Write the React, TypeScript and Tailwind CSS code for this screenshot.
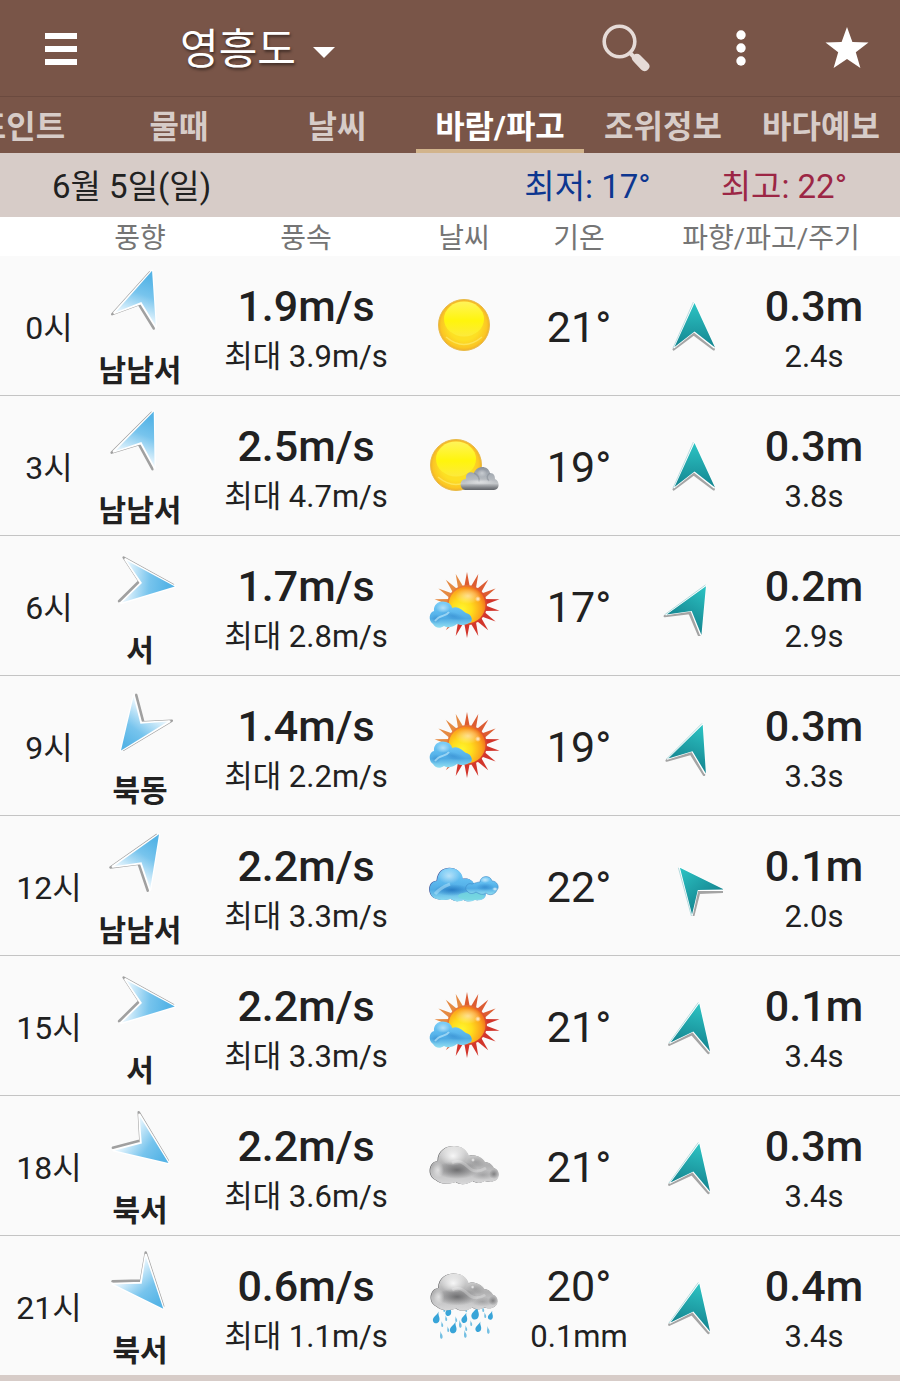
import React, { useState } from "react";
import clsx from "clsx";

type Weather = "sun" | "sunCloud" | "partly" | "clouds" | "overcast" | "rain";

type Forecast = {
  hour: string;
  windAngle: number;
  windDir: string;
  wind: string;
  gust: string;
  weather: Weather;
  temp: string;
  rain?: string;
  waveAngle: number;
  wave: string;
  period: string;
};

const tabs = ["포인트", "물때", "날씨", "바람/파고", "조위정보", "바다예보"];

const forecasts: Forecast[] = [
  { hour: "0시", windAngle: 19, windDir: "남남서", wind: "1.9m/s", gust: "3.9m/s", weather: "sun", temp: "21°", waveAngle: 0, wave: "0.3m", period: "2.4s" },
  { hour: "3시", windAngle: 22, windDir: "남남서", wind: "2.5m/s", gust: "4.7m/s", weather: "sunCloud", temp: "19°", waveAngle: 0, wave: "0.3m", period: "3.8s" },
  { hour: "6시", windAngle: 96, windDir: "서", wind: "1.7m/s", gust: "2.8m/s", weather: "partly", temp: "17°", waveAngle: 30, wave: "0.2m", period: "2.9s" },
  { hour: "9시", windAngle: 216, windDir: "북동", wind: "1.4m/s", gust: "2.2m/s", weather: "partly", temp: "19°", waveAngle: 21, wave: "0.3m", period: "3.3s" },
  { hour: "12시", windAngle: 32, windDir: "남남서", wind: "2.2m/s", gust: "3.3m/s", weather: "clouds", temp: "22°", waveAngle: -39, wave: "0.1m", period: "2.0s" },
  { hour: "15시", windAngle: 96, windDir: "서", wind: "2.2m/s", gust: "3.3m/s", weather: "partly", temp: "21°", waveAngle: 12, wave: "0.1m", period: "3.4s" },
  { hour: "18시", windAngle: 126, windDir: "북서", wind: "2.2m/s", gust: "3.6m/s", weather: "overcast", temp: "21°", waveAngle: 12, wave: "0.3m", period: "3.4s" },
  { hour: "21시", windAngle: 139, windDir: "북서", wind: "0.6m/s", gust: "1.1m/s", weather: "rain", temp: "20°", rain: "0.1mm", waveAngle: 12, wave: "0.4m", period: "3.4s" },
];

// Gradients shared by all the icons
function IconDefs() {
  return (
    <svg className="absolute w-0 h-0" aria-hidden="true">
      <defs>
        <linearGradient id="windFill" x1="0" y1="0" x2="0" y2="1">
          <stop offset="0.15" stopColor="#56b4e6" />
          <stop offset="0.5" stopColor="#77c4ed" />
          <stop offset="0.75" stopColor="#b4dff6" />
          <stop offset="1" stopColor="#f2faff" />
        </linearGradient>
        <linearGradient id="waveFill" x1="0" y1="0" x2="0" y2="1">
          <stop offset="0" stopColor="#2cc4c4" />
          <stop offset="1" stopColor="#158590" />
        </linearGradient>
        <radialGradient id="discFill" cx="0.5" cy="0.5" r="0.5">
          <stop offset="0.6" stopColor="#fde023" />
          <stop offset="0.9" stopColor="#fbc624" />
          <stop offset="1" stopColor="#efb02a" />
        </radialGradient>
        <linearGradient id="discShine" x1="0" y1="0" x2="0" y2="1">
          <stop offset="0" stopColor="#fff45a" />
          <stop offset="0.55" stopColor="#fff50c" />
          <stop offset="1" stopColor="#fdea3c" />
        </linearGradient>
        <linearGradient id="rayFill" gradientUnits="userSpaceOnUse" x1="14" y1="12" x2="62" y2="60">
          <stop offset="0" stopColor="#ee9a3c" />
          <stop offset="0.5" stopColor="#e0552f" />
          <stop offset="1" stopColor="#cf2a26" />
        </linearGradient>
        <radialGradient id="hotFill" cx="0.36" cy="0.62" r="0.68">
          <stop offset="0" stopColor="#fff62e" />
          <stop offset="0.4" stopColor="#ffdc1c" />
          <stop offset="0.8" stopColor="#fba01c" />
          <stop offset="1" stopColor="#ee6c1c" />
        </radialGradient>
        <linearGradient id="blueCloud" x1="0" y1="0" x2="0" y2="1">
          <stop offset="0" stopColor="#7fd0f8" />
          <stop offset="0.4" stopColor="#5cb9ee" />
          <stop offset="0.65" stopColor="#4fabe4" />
          <stop offset="1" stopColor="#93e0f2" />
        </linearGradient>
        <linearGradient id="greyCloud" x1="0" y1="0" x2="0" y2="1">
          <stop offset="0" stopColor="#e2e2e2" />
          <stop offset="0.5" stopColor="#b0b0b1" />
          <stop offset="1" stopColor="#d8d8d9" />
        </linearGradient>
        <linearGradient id="slateCloud" x1="0" y1="0" x2="0" y2="1">
          <stop offset="0" stopColor="#8b929c" />
          <stop offset="0.35" stopColor="#a9afb6" />
          <stop offset="0.72" stopColor="#c3c6c9" />
          <stop offset="0.9" stopColor="#7d8085" />
          <stop offset="1" stopColor="#606368" />
        </linearGradient>
        <radialGradient id="blueShade">
          <stop offset="0" stopColor="#1f72bd" stopOpacity="0.8" />
          <stop offset="1" stopColor="#1f72bd" stopOpacity="0" />
        </radialGradient>
        <radialGradient id="greyShade">
          <stop offset="0" stopColor="#5c5c5e" stopOpacity="0.8" />
          <stop offset="1" stopColor="#5c5c5e" stopOpacity="0" />
        </radialGradient>
        <radialGradient id="whiteGlow">
          <stop offset="0" stopColor="#ffffff" stopOpacity="0.85" />
          <stop offset="1" stopColor="#ffffff" stopOpacity="0" />
        </radialGradient>
      </defs>
    </svg>
  );
}

function WindArrow({ angle }: { angle: number }) {
  const shape = "M0 -34L22 18L0 0L-22 18Z";
  return (
    <svg viewBox="-41 -40 80 80" className="block mx-auto size-20" aria-hidden="true">
      <g transform={`rotate(${angle})`} strokeLinejoin="round">
        <path d={shape} transform="translate(-1.6 2)" fill="#a0a0a0" stroke="#a0a0a0" strokeWidth="2.4" />
        <path d={shape} fill="#fff" stroke="#fff" strokeWidth="2.4" />
        <path d="M0 -34L21.5 17L0 -1L-21 17Z" fill="url(#windFill)" />
      </g>
    </svg>
  );
}

function WaveArrow({ angle }: { angle: number }) {
  return (
    <svg viewBox="-31 -30 60 60" className="block mx-auto size-15" aria-hidden="true">
      <g transform={`rotate(${angle})`} strokeLinejoin="round">
        <path d="M0 -22L20 22L0 7L-20 22Z" transform="translate(-0.3 1.4)" fill="#a4a4a4" stroke="#a4a4a4" strokeWidth="2.4" />
        <path d="M0 -23L20 21L0 5L-20 21Z" fill="#fff" stroke="#fff" strokeWidth="2.4" />
        <path d="M-0.6 -24L-21 22" stroke="#9bcfd2" strokeWidth="0.7" />
        <path d="M0.5 -23L21 21.5L0.5 5.5L-19.5 21Z" fill="url(#waveFill)" />
      </g>
    </svg>
  );
}

function Disc({ cx }: { cx: number }) {
  return (
    <>
      <circle cx={cx} cy="35" r="25.5" fill="url(#discFill)" stroke="#e9bb48" strokeWidth="1" />
      <ellipse cx={cx} cy="29" rx="20" ry="17.5" fill="url(#discShine)" />
      <path d={`M${cx - 18} 47Q${cx} 62 ${cx + 18} 47`} fill="none" stroke="#fdf07a" strokeWidth="1.5" opacity="0.6" />
    </>
  );
}

const greyCloudPath =
  "M8 50C-1 46 1 32 10 31C10 20 19 16 26 16C34 16 39 20 41 26C46 24 54 27 57 32C62 32 65 36 66 38C73 40 72 50 66 51C63 53 59 51 57 51C52 54 48 53 45 51C40 54 34 56 28 52C20 55 12 54 8 50Z";

function GreyCloud() {
  return (
    <>
      <path d={greyCloudPath} fill="#5b5b5d" transform="translate(-0.6 0)" />
      <path d={greyCloudPath} fill="url(#greyCloud)" />
      <ellipse cx="29" cy="40" rx="21" ry="9" fill="url(#greyShade)" />
      <ellipse cx="55" cy="45" rx="12" ry="5" fill="url(#greyShade)" opacity="0.4" />
      <circle cx="66" cy="44" r="5" fill="url(#greyShade)" opacity="0.8" />
      <ellipse cx="48" cy="32" rx="10" ry="6" fill="url(#greyShade)" opacity="0.35" />
      <ellipse cx="25" cy="26" rx="13" ry="10" fill="url(#whiteGlow)" />
      <ellipse cx="10" cy="40" rx="6" ry="8" fill="url(#whiteGlow)" opacity="0.7" />
      <path d="M24 33C31 29 36 33 40 37S50 43 58 38" fill="none" stroke="#fff" strokeWidth="3" opacity="0.25" />
      <circle cx="45" cy="30" r="2" fill="url(#whiteGlow)" />
    </>
  );
}

// tip x, tip y, size
const drops = [
  [9, 43, 8], [21, 37, 7], [48, 38, 9], [37, 44, 7], [63, 42, 6], [26, 53, 8], [51, 53, 7],
  [14, 52, 3], [16, 37, 3], [28, 47, 3], [38, 37, 3], [32, 51, 4], [43, 51, 3], [57, 43, 3],
  [13, 62, 4], [38, 56, 3], [37, 61, 4], [60, 57, 4], [18, 46, 3], [55, 37, 3], [20, 57, 3],
];

const rays = Array.from({ length: 18 }, (_, i) => i * 20);

function WeatherIcon({ kind }: { kind: Weather }) {
  return (
    <svg viewBox="0 0 72 72" className="block mx-auto size-18" aria-hidden="true">
      {kind === "sun" && <Disc cx={36} />}

      {kind === "sunCloud" && (
        <>
          <Disc cx={28} />
          <path
            d="M37 60C31 59 31 49 38 49C37 43 42 41 46 43C49 35 60 35 62 43C66 43 67 46 67 49C72 51 72 60 66 60Z"
            fill="url(#slateCloud)"
          />
          <path d="M46 43C50 45 52 48 51 52M62 43C59 45 58 48 61 51" fill="none" stroke="#747b84" strokeWidth="1.5" opacity="0.4" />
          <ellipse cx="54" cy="43" rx="5" ry="4" fill="url(#whiteGlow)" opacity="0.5" />
          <ellipse cx="52" cy="52" rx="16" ry="3" fill="url(#whiteGlow)" opacity="0.6" />
        </>
      )}

      {kind === "partly" && (
        <>
          {rays.map((deg) => (
            <path
              key={deg}
              d="M39 2L42 18H36Z"
              fill={deg > 60 && deg < 220 ? "#d2352b" : deg > 240 ? "#e58a42" : "#dc5c32"}
              transform={`rotate(${deg} 39 35)`}
            />
          ))}
          <circle cx="39" cy="35" r="20" fill="url(#rayFill)" />
          <circle cx="39" cy="35" r="18.5" fill="url(#hotFill)" />
          <ellipse cx="40" cy="26" rx="13" ry="8" fill="url(#whiteGlow)" opacity="0.6" />
          <circle cx="50" cy="29" r="3" fill="url(#whiteGlow)" />
          <path
            d="M5 54C0 51 1 42 6 41C5 33 13 30 18 32C22 33 24 36 24 38C30 35 35 41 38 43C44 44 46 52 41 53C36 56 32 55 29 54C24 58 19 58 16 56C12 59 7 58 5 54Z"
            fill="url(#blueCloud)"
          />
          <ellipse cx="25" cy="46" rx="13" ry="4" fill="url(#blueShade)" opacity="0.45" transform="rotate(14 25 46)" />
          <ellipse cx="8" cy="49" rx="5" ry="5" fill="url(#blueShade)" opacity="0.4" />
          <ellipse cx="15" cy="38" rx="7" ry="5" fill="url(#whiteGlow)" opacity="0.6" />
          <path d="M7 51C12 44 18 47 21 42" fill="none" stroke="#c9effd" strokeWidth="2" opacity="0.6" />
        </>
      )}

      {kind === "clouds" && (
        <>
          <path
            d="M6 48C-1 43 1 31 9 31C10 21 16 18 22 18C29 18 34 22 35 29C40 28 45 30 46 34L58 44C58 50 51 51 47 50C43 52 39 52 36 50C31 52 27 52 23 49C17 51 10 50 6 48Z"
            fill="#44569c"
            transform="translate(-0.6 -0.2)"
          />
          <path
            d="M6 48C-1 43 1 31 9 31C10 21 16 18 22 18C29 18 34 22 35 29C40 28 45 30 46 34L58 44C58 50 51 51 47 50C43 52 39 52 36 50C31 52 27 52 23 49C17 51 10 50 6 48Z"
            fill="url(#blueCloud)"
          />
          <ellipse cx="24" cy="40" rx="18" ry="6" fill="url(#blueShade)" />
          <ellipse cx="21" cy="26" rx="11" ry="8" fill="url(#whiteGlow)" opacity="0.6" />
          <path d="M7 44C12 38 17 36 22 34" fill="none" stroke="#b5e5fb" strokeWidth="3" opacity="0.5" />
          <ellipse cx="43" cy="46" rx="13" ry="4" fill="#74d8dc" opacity="0.75" />
          <path
            d="M40 42C35 39 39 32 44 34C47 33 50 32 52 32C52 26 62 24 64 31C69 31 72 37 69 40C67 45 61 46 58 43C54 46 50 43 48 42C45 44 42 44 40 42Z"
            fill="url(#blueCloud)"
            stroke="#3a86c4"
            strokeWidth="0.6"
          />
          <ellipse cx="57" cy="37" rx="9" ry="4" fill="url(#blueShade)" opacity="0.6" />
          <ellipse cx="57" cy="30" rx="5" ry="3" fill="url(#whiteGlow)" opacity="0.7" />
          <ellipse cx="67" cy="39" rx="3" ry="2" fill="url(#whiteGlow)" />
        </>
      )}

      {kind === "overcast" && <GreyCloud />}

      {kind === "rain" && (
        <>
          {drops.map(([x, y, s]) => (
            <path
              key={`${x}-${y}`}
              d="M-0.2 -0.2C0.1 0.4 0.6 0.5 0.5 1C0.4 1.4 -0.2 1.4 -0.3 0.9C-0.4 0.5 -0.1 0.3 -0.2 -0.2Z"
              fill={s > 5 ? "#38a4d8" : "#74bfe2"}
              transform={`translate(${x} ${y}) scale(${s > 5 ? -s : s * 0.8} ${s > 5 ? s : s * 1.3})`}
            />
          ))}
          <g transform="translate(1 -12) scale(0.97)">
            <GreyCloud />
          </g>
        </>
      )}
    </svg>
  );
}

export default function App() {
  const [active, setActive] = useState("바람/파고");

  return (
    <div className="w-full bg-[#d7ccc8] text-[#212121] font-[Roboto,'Noto_Sans_CJK_KR',sans-serif]">
      <IconDefs />

      {/* App bar */}
      <header className="flex items-center h-[97px] pl-[45px] pr-[31px] bg-[#795548] border-b border-[#6b4a3f] text-white">
        <button aria-label="메뉴" className="flex flex-col gap-[7px] w-8 pt-[2px] cursor-pointer">
          <span className="h-[6px] bg-white" />
          <span className="h-[6px] bg-white" />
          <span className="h-[6px] bg-white" />
        </button>
        <button className="flex items-center gap-[17px] ml-[103px] pt-1 text-[42px] leading-[60px] cursor-pointer [text-shadow:1px_2px_3px_rgba(0,0,0,0.5)]">
          영흥도
          <svg viewBox="0 0 22 11" className="w-[22px] h-[11px] mt-1" aria-hidden="true">
            <path d="M0 0H22L11 11Z" fill="#fff" />
          </svg>
        </button>
        <div className="flex items-center ml-auto">
          <button aria-label="검색" className="cursor-pointer">
            <svg viewBox="0 0 50 50" className="block size-[50px]" aria-hidden="true">
              <circle cx="18.5" cy="18.5" r="15.3" fill="none" stroke="#e6dbd7" strokeWidth="3.6" />
              <path d="M29 30L34 35" stroke="#e6dbd7" strokeWidth="4" />
              <path d="M31 34L34 31Q37 30 39 32L47 40Q50 43 47.500 46L46 47.500Q43 49.500 40 46.500L33 39Q30 36 31 34Z" fill="#e6dbd7" />
            </svg>
          </button>
          <button aria-label="더보기" className="ml-[85px] cursor-pointer">
            <svg viewBox="0 0 10 36" className="block w-[10px] h-9" aria-hidden="true">
              <circle cx="5" cy="5" r="4.7" fill="#fff" />
              <circle cx="5" cy="18" r="4.7" fill="#fff" />
              <circle cx="5" cy="31" r="4.7" fill="#fff" />
            </svg>
          </button>
          <button aria-label="즐겨찾기" className="ml-[79px] cursor-pointer">
            <svg viewBox="0 0 44 42" className="block w-11 h-[42px]" aria-hidden="true">
              <path d="M22 0L27.4 15L43.5 15.4L30.8 25.2L35.4 41L22 32L8.6 41L13.2 25.2L0.5 15.4L16.6 15Z" fill="#fff" />
            </svg>
          </button>
        </div>
      </header>

      {/* Tabs, scrolled to the right end */}
      <nav role="tablist" className="flex justify-end overflow-hidden bg-[#795548]">
        {tabs.map((tab) => (
          <button
            key={tab}
            role="tab"
            aria-selected={tab === active}
            onClick={() => setActive(tab)}
            className={clsx(
              "shrink-0 h-14 pt-2 border-b-4 text-[32px] leading-[44px] font-bold whitespace-nowrap cursor-pointer",
              tab === active
                ? "w-[168px] border-[#d2b48c] text-white"
                : "w-[158px] border-transparent text-[#d7ccc8]"
            )}
          >
            {tab}
          </button>
        ))}
      </nav>

      {/* Date and daily range */}
      <section className="flex items-center h-16 pt-1 pl-[52px] pr-[53px] text-[33px]">
        <h2>6월 5일(일)</h2>
        <p className="ml-auto text-[#0d3690]">최저: 17°</p>
        <p className="ml-[70px] text-[#9c2645]">최고: 22°</p>
      </section>

      <table className="w-full table-fixed border-separate border-spacing-0 bg-[#fafafa] text-center">
        <colgroup>
          <col className="w-[96px]" />
          <col className="w-[88px]" />
          <col className="w-[244px]" />
          <col className="w-[72px]" />
          <col className="w-[158px]" />
          <col className="w-[70px]" />
          <col className="w-[172px]" />
        </colgroup>
        <thead className="bg-white text-[28px] leading-[35px] text-[#757575]">
          <tr>
            <td />
            <th scope="col" className="p-0 pt-1 font-normal">풍향</th>
            <th scope="col" className="p-0 pt-1 font-normal">풍속</th>
            <th scope="col" className="p-0 pt-1 font-normal">날씨</th>
            <th scope="col" className="p-0 pt-1 font-normal">기온</th>
            <th scope="col" colSpan={2} className="p-0 pt-1 pr-4 font-normal">파향/파고/주기</th>
          </tr>
        </thead>
        <tbody>
          {forecasts.map((f) => (
            <tr key={f.hour} className="h-[140px] last:h-[139px] *:border-b *:border-[#c4c4c4] last:*:border-b-0">
              <th scope="row" className="p-0 pt-1 pl-[2px] font-normal text-[32px]">{f.hour}</th>
              <td className="p-0">
                <WindArrow angle={f.windAngle} />
                <p className="mt-[10px] text-[30px] leading-9 font-bold whitespace-nowrap">{f.windDir}</p>
              </td>
              <td className="p-0 pt-[7px]">
                <p className="text-[43px] leading-[56px] font-medium">{f.wind}</p>
                <p className="text-[31px] leading-[46px]">최대 {f.gust}</p>
              </td>
              <td className="p-0">
                <WeatherIcon kind={f.weather} />
              </td>
              <td className={clsx("p-0", f.rain ? "pt-[7px]" : "pt-[2px]")}>
                <p className="text-[43px] leading-[56px]">{f.temp}</p>
                {f.rain && <p className="text-[31px] leading-[46px]">{f.rain}</p>}
              </td>
              <td className="p-0">
                <WaveArrow angle={f.waveAngle} />
              </td>
              <td className="p-0 pt-[7px]">
                <p className="text-[43px] leading-[56px] font-medium">{f.wave}</p>
                <p className="text-[31px] leading-[46px]">{f.period}</p>
              </td>
            </tr>
          ))}
        </tbody>
      </table>
      <div className="h-[6px]" />
    </div>
  );
}
